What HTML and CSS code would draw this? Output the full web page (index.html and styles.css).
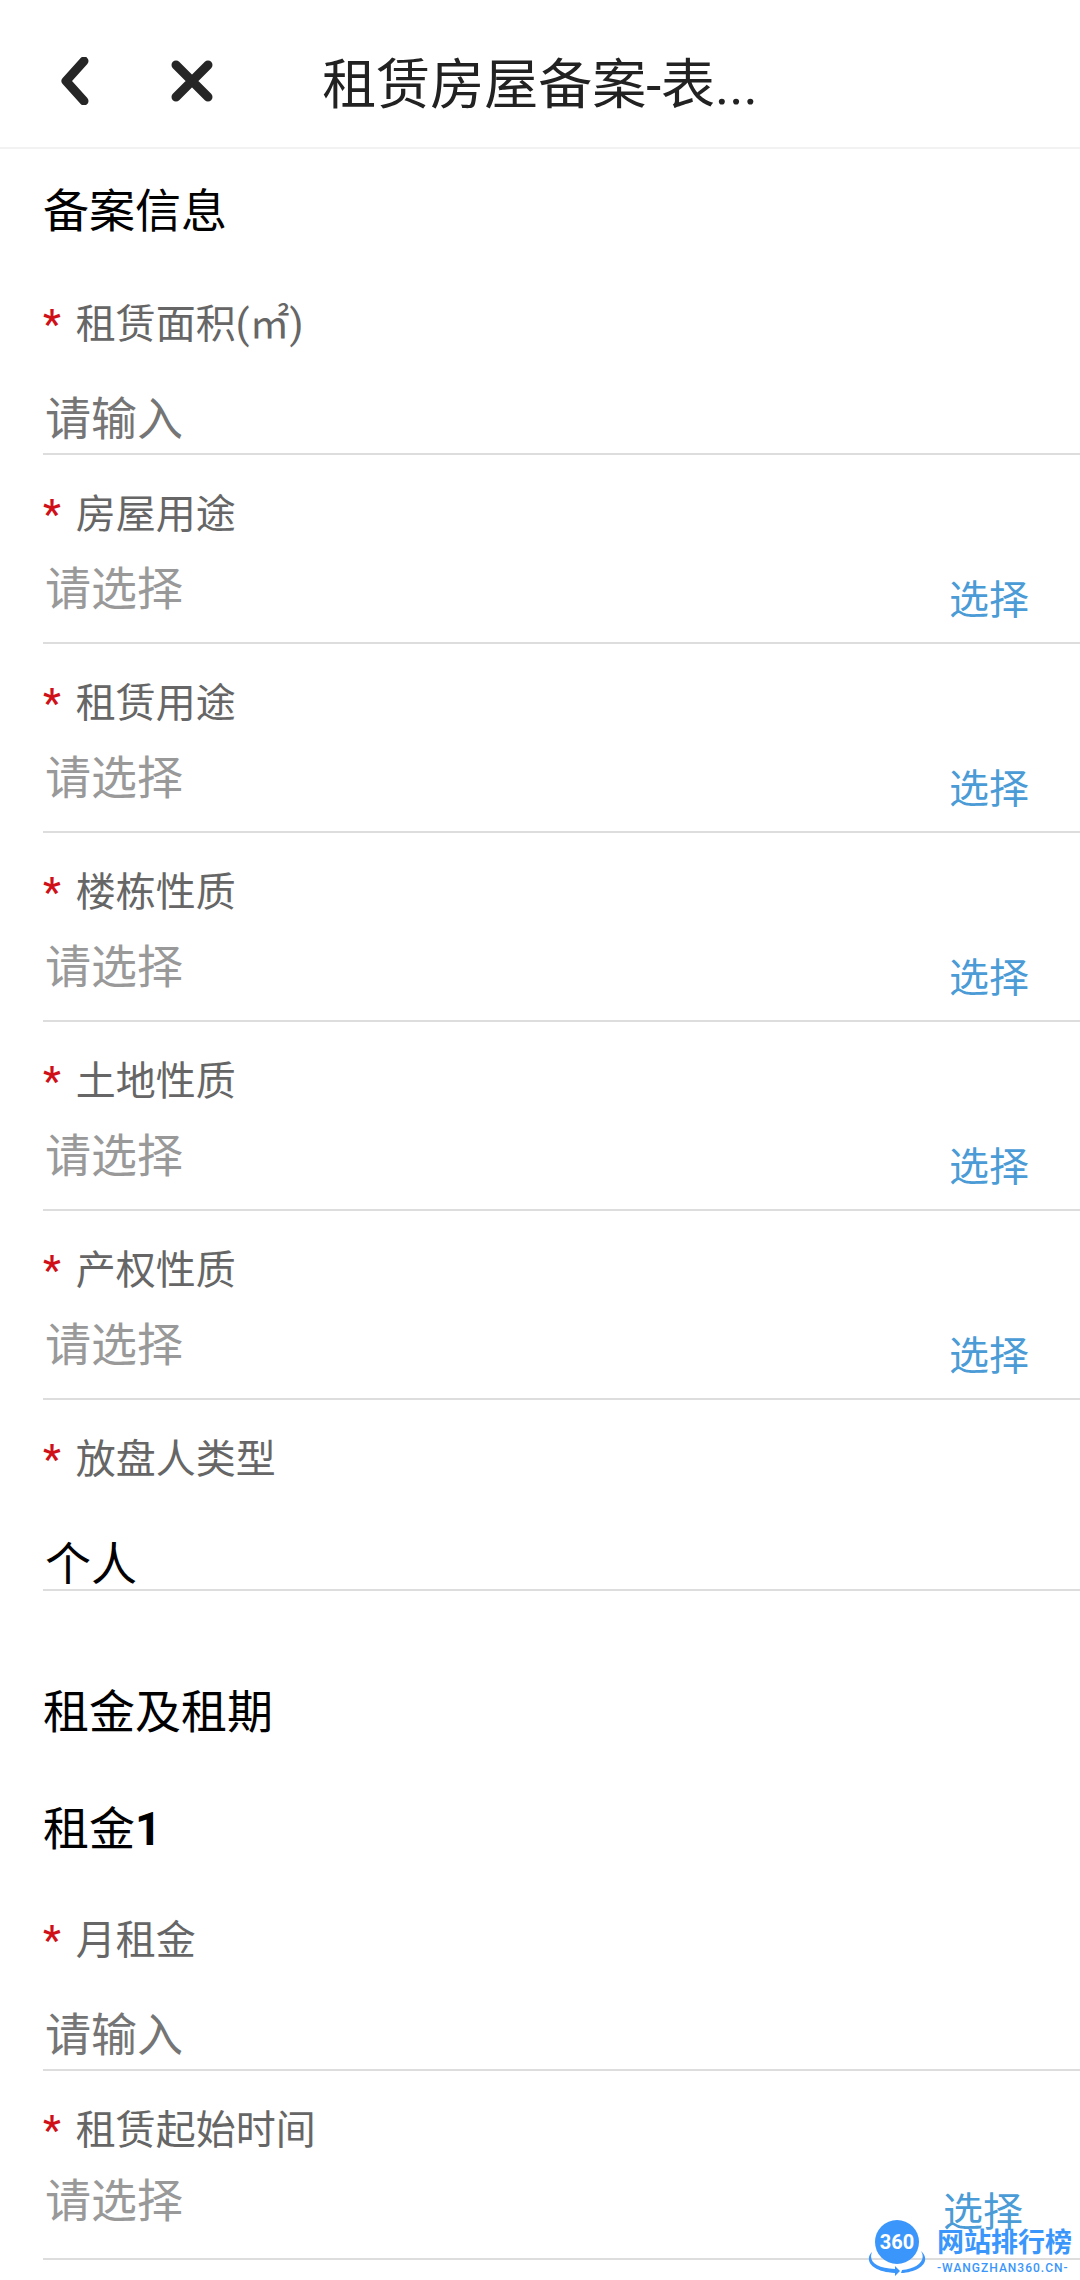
FILE: index.html
```html
<!DOCTYPE html>
<html lang="zh-CN">

<head>
    <meta charset="UTF-8">
    <meta name="viewport" content="width=device-width, initial-scale=1.0">
    <title>租赁房屋备案</title>
    <link rel="stylesheet" href="styles.css">
</head>

<body>
    <header class="navbar">
        <div class="nav-actions">
            <button type="button" class="icon-btn" aria-label="返回">
                <svg width="48" height="48" viewBox="0 0 48 48"><path d="M33 4 15 24 33 44" /></svg>
            </button>
            <button type="button" class="icon-btn" aria-label="关闭">
                <svg width="48" height="48" viewBox="0 0 48 48"><path d="M8 8 40 40M40 8 8 40" /></svg>
            </button>
        </div>
        <h1>租赁房屋备案-表...</h1>
    </header>

    <form class="record-form">
        <section>
            <h2>备案信息</h2>
            <div class="field">
                <label for="area">租赁面积(㎡)</label>
                <input type="text" id="area" class="text-input" placeholder="请输入" required>
            </div>
            <div class="field">
                <label for="houseUse">房屋用途</label>
                <div class="picker">
                    <input type="text" id="houseUse" placeholder="请选择" readonly>
                    <button type="button">选择</button>
                </div>
            </div>
            <div class="field">
                <label for="rentUse">租赁用途</label>
                <div class="picker">
                    <input type="text" id="rentUse" placeholder="请选择" readonly>
                    <button type="button">选择</button>
                </div>
            </div>
            <div class="field">
                <label for="building">楼栋性质</label>
                <div class="picker">
                    <input type="text" id="building" placeholder="请选择" readonly>
                    <button type="button">选择</button>
                </div>
            </div>
            <div class="field">
                <label for="land">土地性质</label>
                <div class="picker">
                    <input type="text" id="land" placeholder="请选择" readonly>
                    <button type="button">选择</button>
                </div>
            </div>
            <div class="field">
                <label for="property">产权性质</label>
                <div class="picker">
                    <input type="text" id="property" placeholder="请选择" readonly>
                    <button type="button">选择</button>
                </div>
            </div>
            <div class="field">
                <label for="ownerType">放盘人类型</label>
                <input type="text" id="ownerType" class="fixed-input" value="个人" readonly>
            </div>
        </section>

        <section>
            <h2>租金及租期</h2>
            <h3>租金<b>1</b></h3>
            <div class="field">
                <label for="rent">月租金</label>
                <input type="text" id="rent" class="text-input" placeholder="请输入" required>
            </div>
            <div class="field">
                <label for="startDate">租赁起始时间</label>
                <div class="picker date">
                    <input type="text" id="startDate" placeholder="请选择" readonly>
                    <button type="button">选择</button>
                </div>
            </div>
        </section>
    </form>

    <div class="watermark">
        <svg width="60" height="60" viewBox="0 0 60 60">
            <circle cx="30" cy="24" r="22" />
            <path d="M5 34C-3 42 4 54 28 55V58L33 53 28 48V51C10 50 1 44 5 34Z" />
            <path d="M54 33C65 43 53 54 34 55L35 52C49 51 60 43 54 33Z" />
            <text x="30" y="31" text-anchor="middle">360</text>
        </svg>
        <div class="watermark-text">
            <strong>网站排行榜</strong>
            <span>-WANGZHAN360.CN-</span>
        </div>
    </div>
</body>

</html>
```
FILE: styles.css
```css
* {
    box-sizing: border-box;
}

body {
    margin: 0;
    position: relative;
    min-height: 100vh;
    background-color: #fff;
    color: #000;
    font-family: Roboto, "Noto Sans CJK SC", sans-serif;
}

button,
input {
    margin: 0;
    padding: 0;
    border: none;
    background: none;
    font-family: inherit;
}

button {
    cursor: pointer;
}

input:focus {
    outline: none;
}

.navbar {
    display: grid;
    grid-template-columns: 1fr auto 1fr;
    align-items: center;
    padding: 46px 0 21px;
    border-bottom: 2px solid #f2f2f2;
}

.nav-actions {
    display: flex;
    gap: 69px;
    padding: 0 0 10px 51px;
}

.icon-btn {
    display: flex;
}

.icon-btn svg {
    fill: none;
    stroke: #262626;
    stroke-width: 9;
    stroke-linecap: round;
    stroke-linejoin: round;
}

h1,
h2,
h3 {
    margin: 0;
    font-weight: 400;
}

h1 {
    color: #222;
    font-size: 54px;
    line-height: 80px;
}

h2,
h3 {
    font-size: 46px;
    line-height: 60px;
}

section {
    padding: 32px 0 0 43px;
}

section + section {
    padding-top: 91px;
}

h2 {
    margin-bottom: 24px;
}

h3 {
    margin: 57px 0 22px;
}

.field {
    padding-top: 30px;
    border-bottom: 2px solid #ddd;
}

.field label {
    display: block;
    color: #666;
    font-size: 40px;
    line-height: 60px;
}

.field label::before {
    content: "*";
    margin-right: 15px;
    color: #d01018;
    font-weight: 500;
}

.field input {
    display: block;
    width: 100%;
    height: 60px;
    padding-left: 2px;
    color: #000;
    font-size: 46px;
}

.field input::placeholder {
    color: #999;
    opacity: 1;
}

.field .text-input {
    margin: 34px 0 4px;
}

.field .text-input::placeholder {
    color: #757575;
}

.field .fixed-input {
    height: 50px;
    margin: 45px 0 4px;
}

.picker {
    display: flex;
    align-items: flex-end;
    padding: 14px 51px 11px 0;
}

.picker input {
    flex: 1;
    margin-bottom: 12px;
}

.picker button {
    color: #4a9bd6;
    font-size: 40px;
    line-height: 60px;
}

.picker.date {
    padding: 10px 57px 15px 0;
}

/* site badge over the bottom right corner */
.watermark {
    position: absolute;
    right: 8px;
    bottom: 2px;
    display: flex;
    gap: 10px;
    color: #3b96fb;
}

.watermark svg {
    fill: #3b96fb;
}

.watermark text {
    fill: #fff;
    font-size: 20px;
    font-weight: 700;
}

.watermark-text {
    display: flex;
    flex-direction: column;
    padding-top: 8px;
}

.watermark strong {
    font-size: 27px;
    line-height: 34px;
}

.watermark span {
    font-size: 12px;
    font-weight: 500;
    line-height: 16px;
    letter-spacing: 1px;
}
```
